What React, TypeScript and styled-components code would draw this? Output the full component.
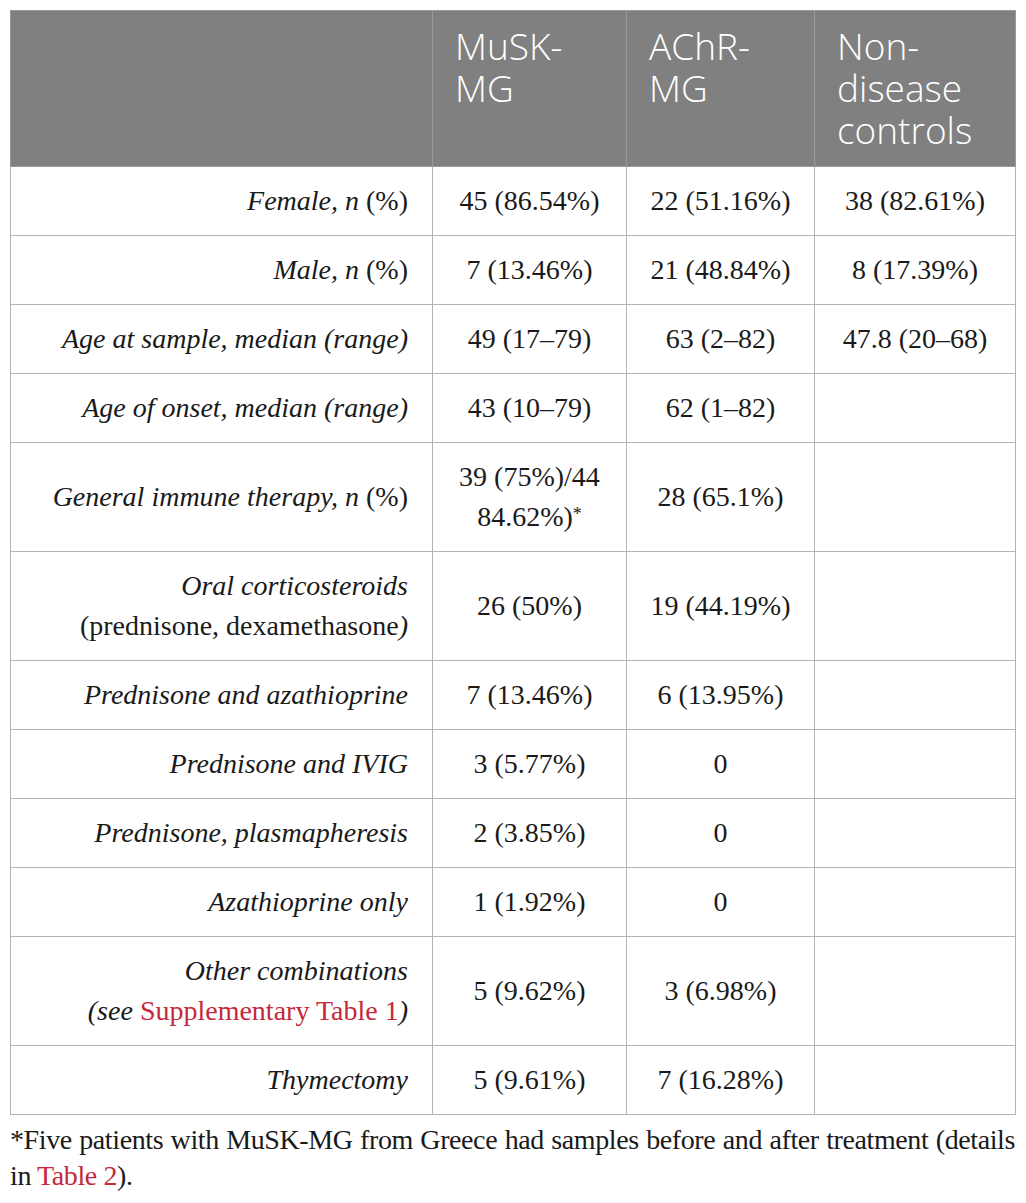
import React from 'react';
import styled, {createGlobalStyle} from 'styled-components';

const GlobalStyle = createGlobalStyle`
  body {
    margin: 0;
    background: #ffffff;
    font-family: "Liberation Serif", "Times New Roman", serif;
    color: #1a1a1a;
  }
`;

const Page = styled.div`
  padding: 10px 11px 0 10px;
  width: 1005px;
`;

const Table = styled.table`
  width: 1005px;
  border-collapse: collapse;
  table-layout: fixed;
`;

const HeadCell = styled.th`
  background: #808080;
  color: #ffffff;
  font-family: "Open Sans", "DejaVu Sans", sans-serif;
  font-weight: 300;
  font-size: 37px;
  line-height: 42px;
  text-align: left;
  vertical-align: top;
  padding: 14px 16px 15px 22px;
  border: 1px solid #9a9a9a;
`;

interface CellProps {
    readonly $label?: boolean;
}

const Cell = styled.td<CellProps>`
  font-size: 28px;
  line-height: 40px;
  padding: 14px ${props => (props.$label ? '24px' : '8px')} 14px 8px;
  text-align: ${props => (props.$label ? 'right' : 'center')};
  vertical-align: middle;
  border: 1px solid #b4b4b4;
  color: #1a1a1a;
`;

const Em = styled.i`
  font-style: italic;
`;

const Link = styled.span`
  color: #c4283a;
`;

const Star = styled.sup`
  font-size: 18px;
  line-height: 0;
  vertical-align: 6px;
`;

const Footnote = styled.p`
  margin: 7px 0 0 0;
  font-size: 28px;
  line-height: 36px;
  letter-spacing: -0.4px;
  text-align: justify;
  color: #1a1a1a;
`;

const Keep = styled.span`
  white-space: nowrap;
`;

interface Row {
    label: React.ReactNode;
    values: React.ReactNode[];
}

const rows: Row[] = [
    {label: <><Em>Female, n</Em> (%)</>, values: ['45 (86.54%)', '22 (51.16%)', '38 (82.61%)']},
    {label: <><Em>Male, n</Em> (%)</>, values: ['7 (13.46%)', '21 (48.84%)', '8 (17.39%)']},
    {label: <Em>Age at sample, median (range)</Em>, values: ['49 (17–79)', '63 (2–82)', '47.8 (20–68)']},
    {label: <Em>Age of onset, median (range)</Em>, values: ['43 (10–79)', '62 (1–82)', '']},
    {
        label: <><Em>General immune therapy, n</Em> (%)</>,
        values: [<>39 (75%)/44<br />84.62%)<Star>*</Star></>, '28 (65.1%)', ''],
    },
    {
        label: <><Em>Oral corticosteroids</Em><br />(prednisone, dexamethasone<Em>)</Em></>,
        values: ['26 (50%)', '19 (44.19%)', ''],
    },
    {label: <Em>Prednisone and azathioprine</Em>, values: ['7 (13.46%)', '6 (13.95%)', '']},
    {label: <Em>Prednisone and IVIG</Em>, values: ['3 (5.77%)', '0', '']},
    {label: <Em>Prednisone, plasmapheresis</Em>, values: ['2 (3.85%)', '0', '']},
    {label: <Em>Azathioprine only</Em>, values: ['1 (1.92%)', '0', '']},
    {
        label: <><Em>Other combinations</Em><br /><Em>(see </Em><Link>Supplementary Table 1</Link><Em>)</Em></>,
        values: ['5 (9.62%)', '3 (6.98%)', ''],
    },
    {label: <Em>Thymectomy</Em>, values: ['5 (9.61%)', '7 (16.28%)', '']},
];

export default function App() {
    return (
        <Page>
            <GlobalStyle />
            <Table>
                <colgroup>
                    <col style={{width: 422}} />
                    <col style={{width: 194}} />
                    <col style={{width: 188}} />
                    <col style={{width: 201}} />
                </colgroup>
                <thead>
                    <tr>
                        <HeadCell />
                        <HeadCell>MuSK-<br />MG</HeadCell>
                        <HeadCell>AChR-<br />MG</HeadCell>
                        <HeadCell>Non-<br />disease<br />controls</HeadCell>
                    </tr>
                </thead>
                <tbody>
                    {rows.map((row, i) => (
                        <tr key={i}>
                            <Cell $label>{row.label}</Cell>
                            {row.values.map((value, j) => (
                                <Cell key={j}>{value}</Cell>
                            ))}
                        </tr>
                    ))}
                </tbody>
            </Table>
            <Footnote>
                *Five patients with MuSK-MG from Greece had samples before and after treatment (details{' '}
                <Keep>in <Link>Table 2</Link>).</Keep>
            </Footnote>
        </Page>
    );
}
